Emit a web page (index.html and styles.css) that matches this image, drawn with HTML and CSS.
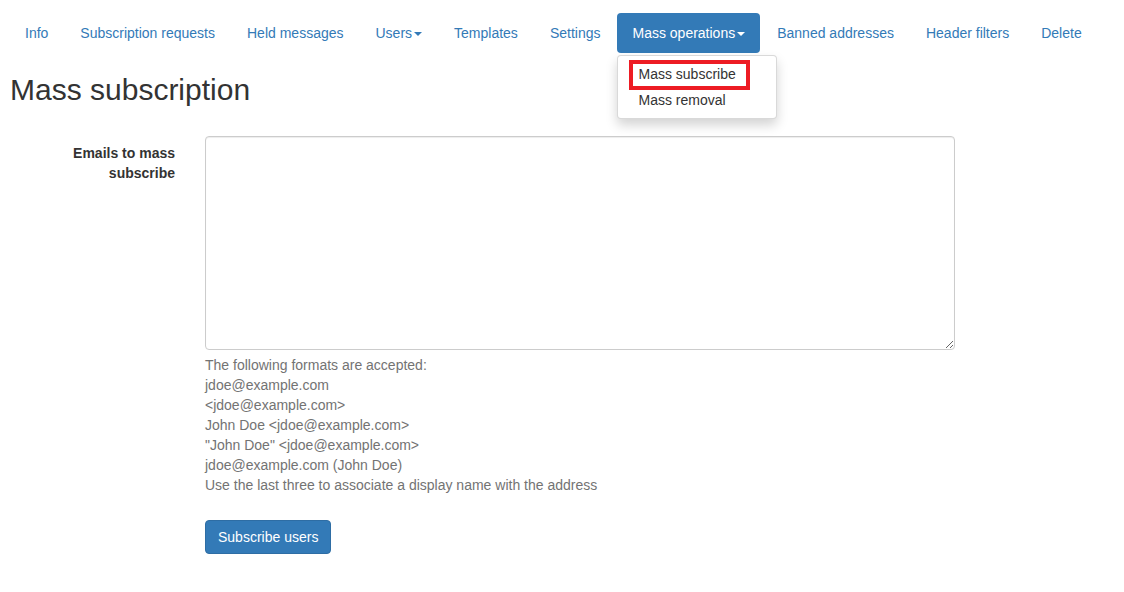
FILE: index.html
```html
<!DOCTYPE html>
<html>
<head>
<meta charset="utf-8">
<link rel="stylesheet" href="styles.css">
</head>
<body>
<div class="page">
  <ul class="nav-pills">
    <li><a href="#">Info</a></li>
    <li><a href="#">Subscription requests</a></li>
    <li><a href="#">Held messages</a></li>
    <li><a href="#">Users<span class="caret"></span></a></li>
    <li><a href="#">Templates</a></li>
    <li><a href="#">Settings</a></li>
    <li class="dropdown">
      <a href="#" class="active">Mass operations<span class="caret"></span></a>
      <ul class="dropdown-menu">
        <li class="highlight"><a href="#">Mass subscribe</a><span class="annot"></span></li>
        <li><a href="#">Mass removal</a></li>
      </ul>
    </li>
    <li><a href="#">Banned addresses</a></li>
    <li><a href="#">Header filters</a></li>
    <li><a href="#">Delete</a></li>
  </ul>

  <h2 class="title">Mass subscription</h2>

  <form class="form">
    <div class="form-group">
      <label class="label">Emails to mass subscribe</label>
      <div class="field">
        <textarea class="textarea"></textarea>
        <div class="help">
          The following formats are accepted:<br>
          jdoe@example.com<br>
          &lt;jdoe@example.com&gt;<br>
          John Doe &lt;jdoe@example.com&gt;<br>
          "John Doe" &lt;jdoe@example.com&gt;<br>
          jdoe@example.com (John Doe)<br>
          Use the last three to associate a display name with the address
        </div>
      </div>
    </div>
    <div class="form-group">
      <div></div>
      <div class="field">
        <button type="button" class="btn">Subscribe users</button>
      </div>
    </div>
  </form>
</div>
</body>
</html>
```

FILE: styles.css
```css
* { box-sizing: border-box; }
html, body {
  margin: 0;
  padding: 0;
  background: #fff;
}
body {
  font-family: "Liberation Sans", Arial, sans-serif;
  font-size: 14px;
  line-height: 20px;
  color: #333;
}
.page {
  padding: 0 10px;
}
.nav-pills {
  list-style: none;
  margin: 13px 0 0 0;
  padding: 0;
  display: flex;
  gap: 2px;
}
.nav-pills > li {
  position: relative;
}
.nav-pills > li > a {
  display: block;
  padding: 10px 15px;
  color: #337ab7;
  text-decoration: none;
  border-radius: 4px;
  line-height: 20px;
}
.nav-pills > li > a.active {
  background: #337ab7;
  color: #fff;
}
.caret {
  display: inline-block;
  width: 0;
  height: 0;
  margin-left: 2px;
  vertical-align: middle;
  border-top: 4px solid;
  border-right: 4px solid transparent;
  border-left: 4px solid transparent;
}
.dropdown-menu {
  position: absolute;
  top: 100%;
  left: 0;
  z-index: 10;
  min-width: 160px;
  margin: 2px 0 0;
  padding: 5px 0;
  list-style: none;
  background: #fff;
  border: 1px solid rgba(0,0,0,.15);
  border-radius: 4px;
  box-shadow: 0 6px 12px rgba(0,0,0,.175);
}
.dropdown-menu > li {
  position: relative;
}
.dropdown-menu > li > a {
  display: block;
  padding: 3px 20px;
  line-height: 20px;
  color: #333;
  text-decoration: none;
  white-space: nowrap;
}
.annot {
  position: absolute;
  left: 11px;
  top: -1px;
  width: 121px;
  height: 30px;
  border: 4px solid #ed1c24;
  pointer-events: none;
}
.title {
  font-family: "Liberation Sans", Arial, sans-serif;
  font-size: 30px;
  font-weight: 500;
  line-height: 33px;
  margin: 20px 0 30px;
  color: #333;
}
.form {
  margin: 0;
}
.form-group {
  display: grid;
  grid-template-columns: 165px 750px;
  column-gap: 30px;
  margin-bottom: 15px;
}
.label {
  font-weight: bold;
  text-align: right;
  padding-top: 7px;
}
.textarea {
  display: block;
  width: 750px;
  height: 214px;
  padding: 6px 12px;
  border: 1px solid #ccc;
  border-radius: 4px;
  box-shadow: inset 0 1px 1px rgba(0,0,0,.075);
  font-family: inherit;
  font-size: 14px;
  resize: vertical;
  margin: 0;
}
.help {
  margin: 5px 0 10px;
  color: #737373;
}
.btn {
  display: inline-block;
  padding: 6px 12px;
  font-family: inherit;
  font-size: 14px;
  line-height: 20px;
  color: #fff;
  background: #337ab7;
  border: 1px solid #2e6da4;
  border-radius: 4px;
  cursor: pointer;
}
```
